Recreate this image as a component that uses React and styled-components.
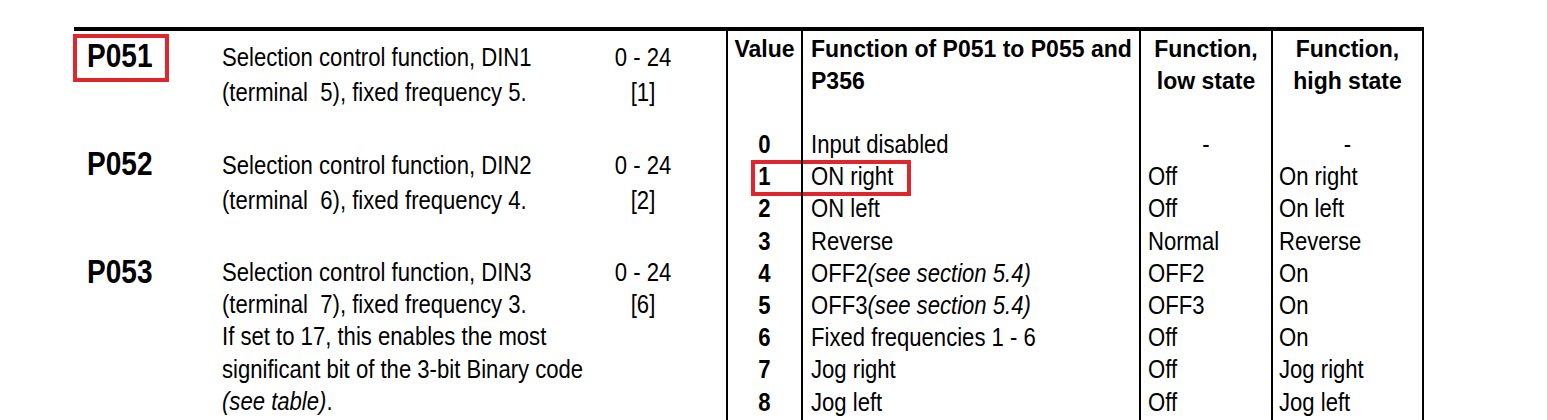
import React from "react";
import styled, { createGlobalStyle } from "styled-components";

const BODY_FONT = '"Liberation Sans Narrow", "Arial Narrow", "Liberation Sans", Arial, sans-serif';
const SANS = '"Liberation Sans", Arial, sans-serif';
const RED = "#e0262c";
const NARROW = 0.85;

const Global = createGlobalStyle`
  html, body { margin: 0; padding: 0; background: #fff; }
  body { color: #000; font-family: ${BODY_FONT}; overflow: hidden; }
`;

const Page = styled.div`
  padding: 27px 0 0 74px;
  width: 1350px;
`;

const TopRule = styled.div`
  height: 4px;
  background: #000;
`;

const Body = styled.div`
  display: flex;
  align-items: flex-start;
`;

const ParamList = styled.div`
  width: 652px;
  flex: none;
  padding-top: 9px;
  display: flex;
  flex-direction: column;
  gap: 38px;
`;

const ParamRow = styled.div`
  display: grid;
  grid-template-columns: 148px 368px 106px;
  font-size: 26px;
  line-height: ${(p) => p.$leading}px;
`;

const Code = styled.div`
  position: relative;
  padding-left: 13px;
  font-weight: 700;
  font-size: 33px;
  line-height: 31px;
`;

const CodeText = styled.span`
  display: inline-block;
  transform: scaleX(${NARROW});
  transform-origin: left center;
`;

const Lines = styled.div`
  white-space: pre;
  text-align: ${(p) => (p.$center ? "center" : "left")};
`;

const Line = styled.div`
  transform: scaleX(${NARROW});
  transform-origin: ${(p) => (p.$center ? "center" : "left")} center;
`;

const Highlight = styled.span`
  position: absolute;
  left: ${(p) => p.$x}px;
  top: ${(p) => p.$y}px;
  width: ${(p) => p.$w}px;
  height: ${(p) => p.$h}px;
  border: 4px solid ${RED};
  box-sizing: border-box;
  pointer-events: none;
`;

const Table = styled.div`
  display: grid;
  grid-template-columns: 75px 338px 132px 153px;
  flex: none;
`;

const Cell = styled.div`
  position: relative;
  box-sizing: border-box;
  border-left: 2px solid #000;
  border-right: ${(p) => (p.$last ? "2px solid #000" : "0")};
  white-space: nowrap;
  text-align: ${(p) => p.$align || "left"};
  padding-left: ${(p) => p.$pad || 0}px;
`;

const HeadCell = styled(Cell)`
  font-family: ${SANS};
  font-weight: 700;
  font-size: 23px;
  line-height: 32px;
  padding-top: 2px;
  padding-bottom: 31px;
`;

const DataCell = styled(Cell)`
  font-size: 26px;
  line-height: 32.2px;
  font-weight: ${(p) => (p.$bold ? 700 : 400)};
`;

const CellText = styled.div`
  transform: scaleX(${NARROW});
  transform-origin: ${(p) => (p.$center ? "center" : "left")} center;
`;

const Filler = styled(Cell)`
  height: 40px;
`;

const Em = styled.i`
  font-style: italic;
`;

const params = [
  {
    code: "P051",
    leading: 35,
    mark: true,
    lines: ["Selection control function, DIN1", "(terminal  5), fixed frequency 5."],
    range: ["0 - 24", "[1]"],
  },
  {
    code: "P052",
    leading: 35,
    lines: ["Selection control function, DIN2", "(terminal  6), fixed frequency 4."],
    range: ["0 - 24", "[2]"],
  },
  {
    code: "P053",
    leading: 32.2,
    lines: [
      "Selection control function, DIN3",
      "(terminal  7), fixed frequency 3.",
      "If set to 17, this enables the most",
      "significant bit of the 3-bit Binary code",
      <>
        <Em>(see table)</Em>.
      </>,
    ],
    range: ["0 - 24", "[6]"],
  },
];

const seeSection = <Em>(see section 5.4)</Em>;

const rows = [
  { v: "0", f: "Input disabled", lo: "-", hi: "-", center: true },
  { v: "1", f: "ON right", lo: "Off", hi: "On right", mark: true },
  { v: "2", f: "ON left", lo: "Off", hi: "On left" },
  { v: "3", f: "Reverse", lo: "Normal", hi: "Reverse" },
  { v: "4", f: <>OFF2{seeSection}</>, lo: "OFF2", hi: "On" },
  { v: "5", f: <>OFF3{seeSection}</>, lo: "OFF3", hi: "On" },
  { v: "6", f: "Fixed frequencies 1 - 6", lo: "Off", hi: "On" },
  { v: "7", f: "Jog right", lo: "Off", hi: "Jog right" },
  { v: "8", f: "Jog left", lo: "Off", hi: "Jog left" },
];

export default function App() {
  return (
    <>
      <Global />
      <Page>
        <TopRule />
        <Body>
          <ParamList>
            {params.map((p) => (
              <ParamRow key={p.code} $leading={p.leading}>
                <Code>
                  <CodeText>{p.code}</CodeText>
                  {p.mark && <Highlight $x={-1} $y={-6} $w={96} $h={48} />}
                </Code>
                <Lines>
                  {p.lines.map((l, i) => (
                    <Line key={i}>{l}</Line>
                  ))}
                </Lines>
                <Lines $center>
                  {p.range.map((l, i) => (
                    <Line key={i} $center>
                      {l}
                    </Line>
                  ))}
                </Lines>
              </ParamRow>
            ))}
          </ParamList>
          <Table>
            <HeadCell $align="center">Value</HeadCell>
            <HeadCell $pad={8}>
              Function of P051 to P055 and
              <br />
              P356
            </HeadCell>
            <HeadCell $align="center">
              Function,
              <br />
              low state
            </HeadCell>
            <HeadCell $align="center" $last>
              Function,
              <br />
              high state
            </HeadCell>
            {rows.map((r) => (
              <React.Fragment key={r.v}>
                <DataCell $bold $align="center">
                  <CellText $center>{r.v}</CellText>
                  {r.mark && <Highlight $x={23} $y={0} $w={160} $h={36} />}
                </DataCell>
                <DataCell $pad={8}>
                  <CellText>{r.f}</CellText>
                </DataCell>
                <DataCell $pad={r.center ? 0 : 7} $align={r.center ? "center" : "left"}>
                  <CellText $center={r.center}>{r.lo}</CellText>
                </DataCell>
                <DataCell $pad={r.center ? 0 : 6} $align={r.center ? "center" : "left"} $last>
                  <CellText $center={r.center}>{r.hi}</CellText>
                </DataCell>
              </React.Fragment>
            ))}
            <Filler />
            <Filler />
            <Filler />
            <Filler $last />
          </Table>
        </Body>
      </Page>
    </>
  );
}
